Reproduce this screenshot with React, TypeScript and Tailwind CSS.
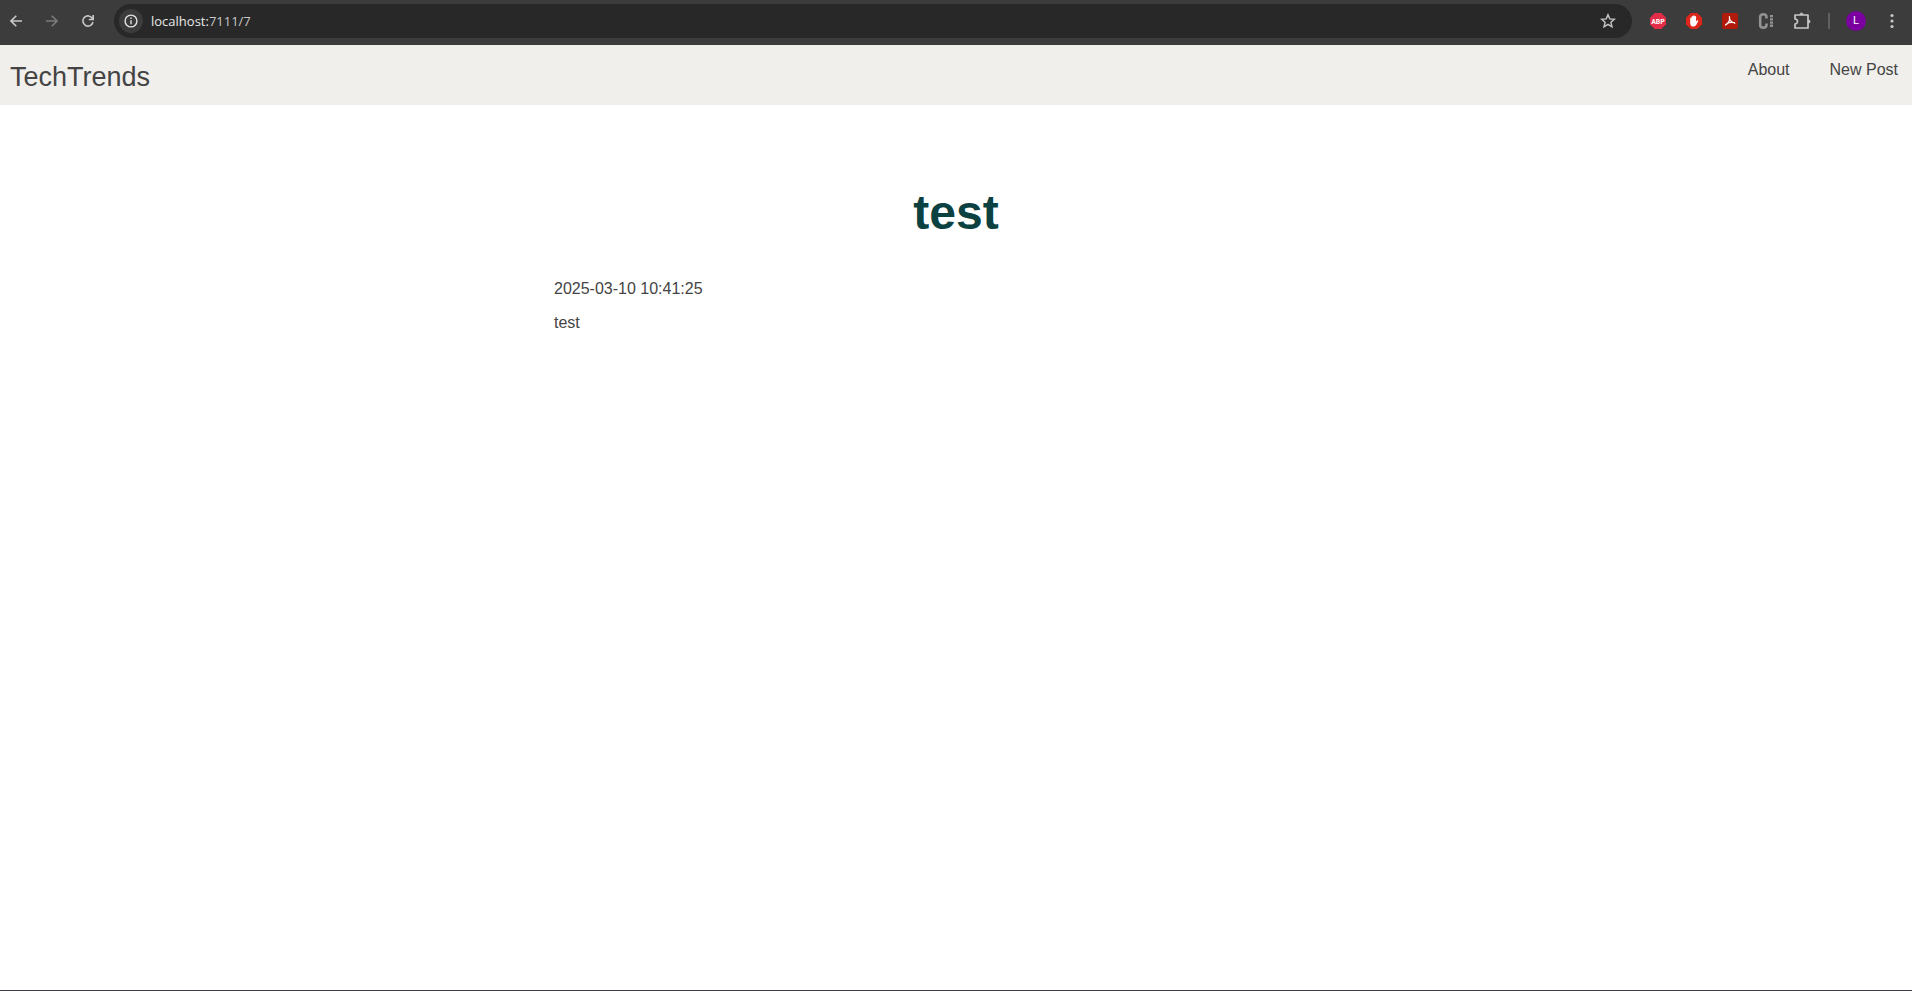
import type { ReactNode } from "react";

function IconButton({ label, children }: { label: string; children: ReactNode }) {
  return (
    <button type="button" aria-label={label} className="flex size-9 shrink-0 items-center justify-center">
      {children}
    </button>
  );
}

function BrowserBar() {
  return (
    <div className="flex h-[45px] items-center bg-[#3c3c3c] pb-[3px] pr-0.5 text-[#c7c7c7]">
      <div className="-ml-0.5 flex shrink-0">
        <IconButton label="Back">
          <svg viewBox="0 0 12 12" className="size-3" fill="none" stroke="currentColor" strokeWidth="1.6">
            <path d="M12 6H1.2M6.3 .7 1 6l5.3 5.3" />
          </svg>
        </IconButton>
        <IconButton label="Forward">
          <svg viewBox="0 0 12 12" className="size-3 text-[#7a7a7a]" fill="none" stroke="currentColor" strokeWidth="1.6">
            <path d="M0 6h10.8M5.7 .7 11 6l-5.3 5.3" />
          </svg>
        </IconButton>
        <IconButton label="Reload">
          <svg viewBox="0 0 12 12" className="size-3" fill="none" stroke="currentColor" strokeWidth="1.6">
            <path d="M11 7A5.1 5.1 0 1 1 10.5 3.6M11.2 0v4.5H6.8" />
          </svg>
        </IconButton>
      </div>
      <div className="ml-2 flex h-[34px] min-w-0 flex-1 items-center rounded-full bg-[#282828] pl-[5px] pr-1.5">
        <button type="button" aria-label="Site information" className="flex size-6 shrink-0 items-center justify-center rounded-full bg-[#3c3c3c]">
          <svg viewBox="0 0 14 14" className="size-3.5" fill="none" stroke="#e3e3e3" strokeWidth="1.4">
            <circle cx="7" cy="7" r="5.9" />
            <path d="M7 6.2v4M7 3.6v1.5" />
          </svg>
        </button>
        <div aria-label="Address" className="min-w-0 flex-1 pl-2 font-['Open_Sans',sans-serif] text-[13px] leading-5 text-[#c7c7c7]">
          <span className="text-[#e8e8e8]">localhost:</span>7111/7
        </div>
        <IconButton label="Bookmark this page">
          <svg viewBox="0 0 16 16" className="size-4" fill="none" stroke="currentColor" strokeWidth="1.4">
            <path d="m8 1.7 1.8 4.2 4.6.4-3.5 3 1.1 4.5-4-2.4-4 2.4 1.1-4.5-3.5-3 4.6-.4z" />
          </svg>
        </IconButton>
      </div>
      <div className="ml-2 flex shrink-0 items-center">
        <IconButton label="Adblock Plus">
          <svg viewBox="0 0 16 16" className="size-4">
            <path d="M4.7 0h6.6L16 4.7v6.6L11.3 16H4.7L0 11.3V4.7z" fill="#e32d48" />
            <text x="8" y="11" textAnchor="middle" fill="#fff" className="font-['Roboto_Condensed','Roboto',sans-serif] text-[8px] font-semibold">ABP</text>
          </svg>
        </IconButton>
        <IconButton label="AdBlock">
          <svg viewBox="0 0 16 16" className="size-4">
            <path d="M4.7 0h6.6L16 4.7v6.6L11.3 16H4.7L0 11.3V4.7z" fill="#dc2619" />
            <path d="M4.200 7.200V5q.7-1 1.400 0V3.400q.8-1 1.500 0V2.800q.8-1 1.500 0v.7q.8-1 1.500 0v5.100l1.100-1.200q1.200-.5 1.200.3l-1.900 3.900q-.9 1.900-2.900 1.900-3.400 0-3.400-3.600z" fill="#fff" />
          </svg>
        </IconButton>
        <IconButton label="Adobe Acrobat">
          <svg viewBox="0 0 16 16" className="size-4">
            <rect width="16" height="16" rx="2" fill="#b11b0c" />
            <path d="M7.400 3.500Q8.200 7.500 6.300 9.500T3.500 12M7.700 6.500Q8.800 9 12.800 10.300M5.500 10.200Q8.500 8.800 12.500 9.700" fill="none" stroke="#fff" strokeWidth="1.200" strokeLinecap="round" />
          </svg>
        </IconButton>
        <IconButton label="C extension">
          <svg viewBox="0 0 16 16" className="size-4" fill="none" stroke="#929292">
            <path d="M8.500 5.500V4.300Q8.500 1.300 5.300 1.300T2.200 4.300v7.400q0 3 3.100 3t3.200-3V10.500" strokeWidth="2.600" />
            <path d="M13.500 2v12" strokeWidth="3" strokeDasharray="2.300 .9" />
          </svg>
        </IconButton>
        <IconButton label="Extensions">
          <svg viewBox="0 0 18 18" className="size-[18px]" fill="none" stroke="currentColor" strokeWidth="1.700" strokeLinejoin="round">
            <path d="M2 3h13v13H2v-4a2.500 2.500 0 0 0 0-5z" />
            <path d="M6.800 2.600a1.700 1.700 0 0 1 3.400 0zM15.400 7.800a1.700 1.700 0 0 1 0 3.400z" fill="currentColor" strokeWidth=".6" />
          </svg>
        </IconButton>
        <span className="mx-2 h-4 w-0.5 bg-[#5f5f5f]" />
        <IconButton label="Profile">
          <span className="flex size-5 items-center justify-center rounded-full bg-[#7b00a0] font-['Roboto',sans-serif] text-[11px] text-white">L</span>
        </IconButton>
        <IconButton label="Menu">
          <svg viewBox="0 0 4 16" className="h-4 w-1" fill="currentColor">
            <circle cx="2" cy="2.500" r="1.600" />
            <circle cx="2" cy="8" r="1.600" />
            <circle cx="2" cy="13.500" r="1.600" />
          </svg>
        </IconButton>
      </div>
    </div>
  );
}

export default function App() {
  return (
    <div className="flex min-h-screen flex-col border-b border-[#3f4046] bg-white font-['Liberation_Sans',Arial,sans-serif] text-base text-[#444]">
      <BrowserBar />
      <header className="flex items-start justify-between bg-[#f0efeb] px-2.5 pb-[9px] pt-[13px]">
        <a href="/" className="text-[27px] leading-[38px]">TechTrends</a>
        <nav className="flex gap-10 pr-1">
          <a href="/about">About</a>
          <a href="/create">New Post</a>
        </nav>
      </header>
      <main className="mx-auto w-full max-w-[804px] pt-20">
        <h1 className="text-center text-[48px] font-bold leading-[56px] text-[#0b4241]">test</h1>
        <p className="mt-9">2025-03-10 10:41:25</p>
        <p className="mt-2.5">test</p>
      </main>
    </div>
  );
}
